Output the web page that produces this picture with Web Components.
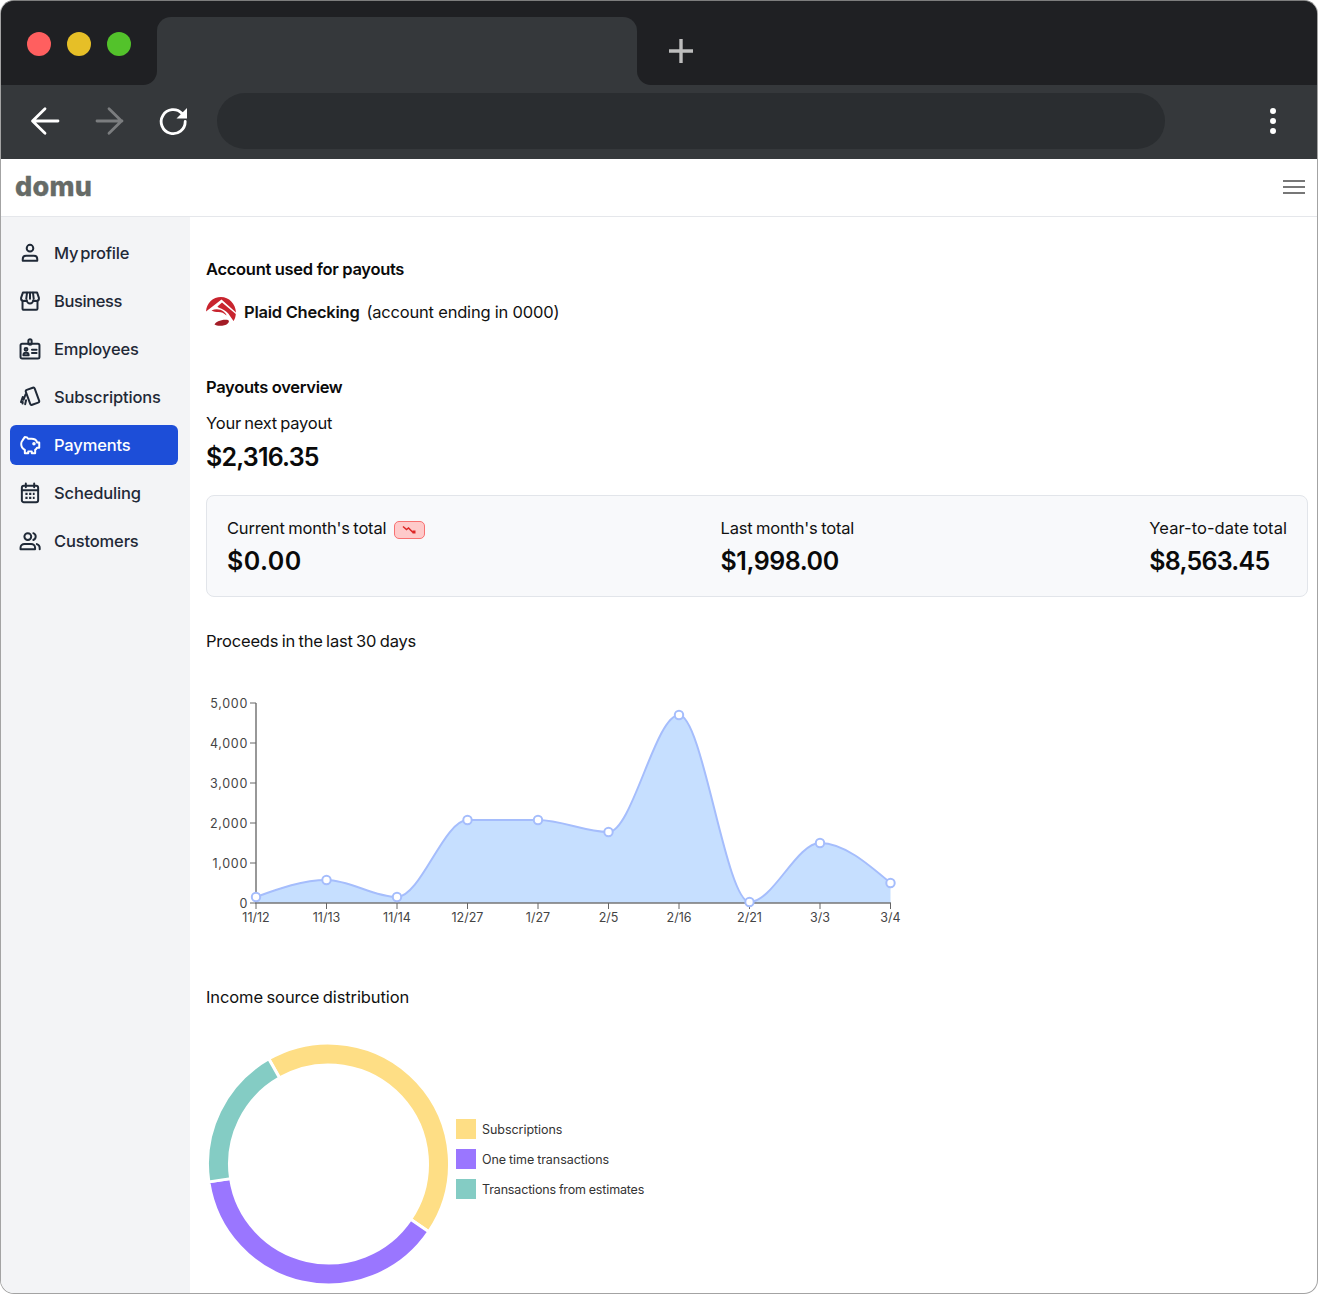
<!DOCTYPE html>
<html><head><meta charset="utf-8">
<style>
html,body{margin:0;padding:0;background:#fff}
body{width:1318px;height:1294px;overflow:hidden;font-family:"Inter","Liberation Sans",sans-serif}
</style></head><body>
<browser-window>
  <app-header slot="header"></app-header>
  <side-nav slot="nav"></side-nav>
  <payouts-page slot="main"></payouts-page>
</browser-window>
<script>
const icons={
profile:'<circle cx="10" cy="5.600" r="3"/><path d="M3.400 17v-1.500c0-1.800 1.400-3 3-3h7.200c1.600 0 3 1.200 3 3V17z"/>',
business:'<path d="M3.200 9.600V17a1 1 0 0 0 1 1h11.600a1 1 0 0 0 1-1V9.600"/><path d="M3.600 2.200h12.800l1.700 5v1a2 2 0 0 1-2.800 1.600 2.600 2.600 0 0 1-2.400-.4 2.900 2.900 0 0 1-5.800 0 2.600 2.600 0 0 1-2.400.4A2 2 0 0 1 1.900 8.200v-1z"/><path d="M7.300 2.400 6.600 8M10 2.400V8M12.700 2.400l.7 5.600"/>',
employees:'<rect x="1.400" y="5.200" width="17.200" height="13.400" rx="1.400"/><path d="M8.500 5.200V2.600a1.500 1.500 0 0 1 3 0v2.600c0 1.200-3 1.200-3 0z"/><circle cx="6.400" cy="10.300" r="1.300"/><path d="M4 15.600c0-1.600 1-2.200 2.400-2.200s2.400.6 2.400 2.200zM11.800 10.600h4.200M11.800 13.600h4.200"/>',
subs:'<rect x="8" y="2.200" width="8.600" height="14.400" rx="1.400" transform="rotate(-20 12 9.500)"/><path d="M6 7.500 4.200 12.500M3.400 10 1.800 14.600M6.400 13 5.600 16.600M3.400 14.500 3.200 16"/>',
pay:'<path d="M5.200 2.800c1.500 0 2.800.8 3.200 1.600h3c2.700 0 4.600 1.500 5.200 3.400h1.800v4.600h-2c-.4.800-1 1.500-1.700 2v3h-3.100v-1.600H8.400v1.600H5.300v-3C3.400 13.300 2 11.300 2 9c0-1.200.4-2.300 1.200-3.200z"/><circle cx="13.600" cy="8.800" r=".7" fill="currentColor"/>',
sched:'<rect x="2.600" y="3.400" width="14.800" height="15" rx="1.800"/><path d="M2.600 7.400h14.800M6.200 1.400v3.400M13.800 1.400v3.400"/><path stroke-width="2" stroke-linecap="butt" stroke-dasharray="2 1.400" d="M5.800 10.800h8.400M5.800 14.400h8.400"/>',
cust:'<circle cx="8" cy="6" r="3.100"/><path d="M1.400 17.400v-1.200c0-2.200 1.700-3.500 3.600-3.500h6c1.900 0 3.600 1.300 3.600 3.500v1.200z"/><path d="M13 2.900a3.300 3.300 0 0 1 0 6.200M16.200 12.800c1.500.5 2.600 1.700 2.600 3.400v1.200"/>'
};
customElements.define('browser-window',class extends HTMLElement{constructor(){super();this.attachShadow({mode:'open'}).innerHTML=`
<style>
:host{display:block;width:1318px;height:1294px;box-sizing:border-box;border:1px solid #a3a3a3;border-top-color:#7d7d7d;border-radius:14px;overflow:hidden;background:#fff}
.top{display:flex;height:84px;background:linear-gradient(#1f2023 40px,#35383b 40px)}
.lights{width:156px;display:flex;gap:16px;padding:31px 0 0 26px;box-sizing:border-box;background:#1f2023;border-bottom-right-radius:14px}
.lights i{width:24px;height:24px;border-radius:50%}
.tab{width:480px;margin-top:16px;height:68px;background:#35383b;border-radius:14px 14px 0 0}
.rest{flex:1;background:#1f2023;border-bottom-left-radius:14px;display:flex;padding:37px 0 0 31px;box-sizing:border-box}
.rest svg{display:block}
.tool{height:74px;background:#35383b;display:flex;align-items:center;padding-left:26px;box-sizing:border-box}
.tool svg{display:block}
.addr{width:948px;height:56px;border-radius:28px;background:#2a2d30;margin-left:26px;margin-top:-2px}
.tool .btn{width:36px;height:36px;margin-right:28px;margin-top:-3px}
.tool .btn.last{margin-right:0}
.dots{margin-left:100px;margin-top:-3px}
.app{display:grid;grid-template-columns:189px 1fr;height:1077px}
</style>
<div class="top">
 <div class="lights"><i style="background:#ff5f5f"></i><i style="background:#e6bf27"></i><i style="background:#53c22b"></i></div>
 <div class="tab"></div>
 <div class="rest"><svg width="26" height="26" viewBox="0 0 26 26"><path d="M13 1v24M1 13h24" stroke="#bdbdbd" stroke-width="3.400" fill="none"/></svg></div>
</div>
<div class="tool">
 <svg class="btn" viewBox="0 0 36 36" fill="none" stroke="#fff" stroke-width="2.800" stroke-linecap="round" stroke-linejoin="round"><path d="M31 18H6M18 5.800 5.500 18 18 30.200"/></svg>
 <svg class="btn" viewBox="0 0 36 36" fill="none" stroke="#7b7d7f" stroke-width="2.800" stroke-linecap="round" stroke-linejoin="round"><path d="M6 18h25M18 5.800 30.500 18 18 30.200"/></svg>
 <svg class="btn last" viewBox="0 0 36 36" fill="none"><path d="M27 10.500A12 12 0 1 0 30.200 18.500" stroke="#fff" stroke-width="2.800" stroke-linecap="round"/><path d="M32 5v10.500H21.500z" fill="#fff"/></svg>
 <div class="addr"></div>
 <svg class="dots" width="16" height="30" viewBox="0 0 16 30" fill="#fff"><circle cx="8" cy="5" r="3"/><circle cx="8" cy="15" r="3"/><circle cx="8" cy="25" r="3"/></svg>
</div>
<slot name="header"></slot>
<div class="app"><slot name="nav"></slot><slot name="main"></slot></div>`}});
customElements.define('app-header',class extends HTMLElement{constructor(){super();this.attachShadow({mode:'open'}).innerHTML=`
<style>
:host{display:flex;align-items:center;justify-content:space-between;height:58px;box-sizing:border-box;border-bottom:1px solid #e5e7eb;padding:0 12px 0 14px;background:#fff}
.logo{font:800 27px/1 "Inter","Liberation Sans",sans-serif;color:#666b67;letter-spacing:.3px;margin-top:-2px;-webkit-text-stroke:.3px #666b67}
svg{display:block;margin-top:-2px}
</style>
<span class="logo">domu</span>
<svg width="22" height="14" viewBox="0 0 22 14" fill="#777"><rect width="22" height="2"/><rect y="6" width="22" height="2"/><rect y="12" width="22" height="2"/></svg>`}});
customElements.define('nav-item',class extends HTMLElement{constructor(){super();const ic=this.getAttribute('icon');this.attachShadow({mode:'open'}).innerHTML=`
<style>
:host{display:flex;align-items:center;height:40px;box-sizing:border-box;padding-left:9px;gap:13px;border-radius:6px;color:#1f2937;font:500 16.500px/20px "Inter","Liberation Sans",sans-serif;letter-spacing:-.15px;word-spacing:-2px}
:host([active]){background:#1d4ed8;color:#fff}
svg{flex:none;display:block}
</style>
<svg width="22" height="22" viewBox="0 0 20 20" fill="none" stroke="currentColor" stroke-width="1.800" stroke-linecap="round" stroke-linejoin="round">${icons[ic]}</svg><slot></slot>`}});
customElements.define('side-nav',class extends HTMLElement{constructor(){super();this.attachShadow({mode:'open'}).innerHTML=`
<style>:host{display:flex;flex-direction:column;gap:8px;background:#f3f4f6;padding:16px 12px 0 9px}</style>
<nav-item icon="profile" style="letter-spacing:-.25px">My profile</nav-item><nav-item icon="business" style="letter-spacing:-.4px">Business</nav-item><nav-item icon="employees">Employees</nav-item><nav-item icon="subs">Subscriptions</nav-item><nav-item icon="pay" active>Payments</nav-item><nav-item icon="sched">Scheduling</nav-item><nav-item icon="cust">Customers</nav-item>`}});
customElements.define('stat-block',class extends HTMLElement{constructor(){super();this.attachShadow({mode:'open'}).innerHTML=`
<style>
:host{display:block;color:#111}
.l{display:flex;align-items:center;gap:8px;font:400 16.500px/24px "Inter","Liberation Sans",sans-serif;letter-spacing:var(--lls,-.2px);word-spacing:-.8px;height:24px}
.v{font:600 25px/32px "Inter","Liberation Sans",sans-serif;letter-spacing:var(--ls,0);margin-top:5px;color:#0a0a0a}
</style><div class="l"><slot name="label"></slot></div><div class="v"><slot></slot></div>`}});
customElements.define('area-chart',class extends HTMLElement{constructor(){super();
const xs=[256,326.5,397,467.5,538,608.5,679,749.5,820,890.5],ys=[897,880,897,820,820,832,715,902,843,883],lab=['11/12','11/13','11/14','12/27','1/27','2/5','2/16','2/21','3/3','3/4'];
const p=xs.map((x,i)=>[x,ys[i]]),n=p.length,h=70.5,m=[];
for(let i=1;i<n-1;i++){const s0=(ys[i]-ys[i-1])/h,s1=(ys[i+1]-ys[i])/h,q=(s0+s1)/2;m[i]=(Math.sign(s0)+Math.sign(s1))*Math.min(Math.abs(s0),Math.abs(s1),.5*Math.abs(q))}
m[0]=(3*(ys[1]-ys[0])/h-m[1])/2;m[n-1]=(3*(ys[n-1]-ys[n-2])/h-m[n-2])/2;
let d=`M${p[0]}`;
for(let i=0;i<n-1;i++){d+=` C${xs[i]+h/3} ${ys[i]+m[i]*h/3} ${xs[i+1]-h/3} ${ys[i+1]-m[i+1]*h/3} ${xs[i+1]} ${ys[i+1]}`}
const ox=206,oy=690;
let t='';[0,1000,2000,3000,4000,5000].forEach((v,i)=>{const y=903-i*40;t+=`<path d="M250 ${y}h6" stroke="#666"/><text class="y" x="248" y="${y+4.500}" text-anchor="end">${v.toLocaleString('en-US')}</text>`});
xs.forEach((x,i)=>{t+=`<path d="M${x} 903v6" stroke="#666"/><text x="${x}" y="921.500" text-anchor="middle">${lab[i]}</text>`});
this.attachShadow({mode:'open'}).innerHTML=`
<style>:host{display:block;height:240px}svg{display:block}text{font:400 12.500px "Inter","Liberation Sans",sans-serif;fill:#444}text.y{letter-spacing:.7px}</style>
<svg width="720" height="240" viewBox="${ox} ${oy} 720 240">
<path d="${d} V903 H256Z" fill="#c6dfff"/><path d="${d}" fill="none" stroke="#a5bdfc" stroke-width="2"/>
<path d="M256 703V903H891" fill="none" stroke="#777" stroke-width="1.500"/>${t}
${p.map(q=>`<circle cx="${q[0]}" cy="${q[1]}" r="4.200" fill="#fff" stroke="#a5bdfc" stroke-width="2"/>`).join('')}
</svg>`}});
customElements.define('donut-chart',class extends HTMLElement{constructor(){super();
const cx=122.5,cy=122,R=121,r=99;const pt=(a,q)=>{const t=(a-90)*Math.PI/180;return `${(cx+q*Math.cos(t)).toFixed(2)} ${(cy+q*Math.sin(t)).toFixed(2)}`};
const seg=(a,b,c)=>`<path d="M${pt(a,R)}A${R} ${R} 0 ${b-a>180?1:0} 1 ${pt(b,R)}L${pt(b,r)}A${r} ${r} 0 ${b-a>180?1:0} 0 ${pt(a,r)}Z" fill="${c}" stroke="#fff" stroke-width="3" stroke-linejoin="round"/>`;
this.attachShadow({mode:'open'}).innerHTML=`
<style>
:host{display:flex;align-items:flex-start;height:240px;gap:5px}
svg{display:block;flex:none;margin-top:-2px}
ul{list-style:none;margin:0;padding:75px 0 0;display:flex;flex-direction:column;gap:10px}
li{display:flex;align-items:center;gap:6px;height:20px;font:400 12.500px/20px "Inter","Liberation Sans",sans-serif;color:#333;letter-spacing:-.05px;word-spacing:-.5px}
li span{margin-top:2px}
i{width:20px;height:20px;display:block}
</style>
<svg width="245" height="244" viewBox="0 0 245 244">${seg(-29.600,124,'#fede85')}${seg(124,261.500,'#9a76ff')}${seg(261.500,330.400,'#84ccc4')}</svg>
<ul><li><i style="background:#fede85"></i><span>Subscriptions</span></li><li><i style="background:#9a76ff"></i><span>One time transactions</span></li><li style="letter-spacing:-.15px"><i style="background:#84ccc4"></i><span>Transactions from estimates</span></li></ul>`}});
customElements.define('payouts-page',class extends HTMLElement{constructor(){super();this.attachShadow({mode:'open'}).innerHTML=`
<style>
:host{display:block;padding:41px 9px 0 16px;color:#111;font-family:"Inter","Liberation Sans",sans-serif;min-width:0;overflow:hidden}
h2{margin:0;font:600 16.500px/22px "Inter","Liberation Sans",sans-serif;letter-spacing:-.3px;color:#0a0a0a}
.acct{display:flex;align-items:center;height:32px;margin-top:16px;gap:8px;font-size:16.500px;letter-spacing:-.2px}
.acct b{font-weight:600;color:#111;margin-right:-1px;letter-spacing:-.25px}
.next{font-size:16.500px;line-height:24px;letter-spacing:-.2px;word-spacing:-1.300px;margin-top:13px}
.big{font:600 25px/32px "Inter","Liberation Sans",sans-serif;letter-spacing:-.8px;margin-top:6px;margin-bottom:-1px;color:#0a0a0a}
.card{display:flex;justify-content:space-between;height:102px;box-sizing:border-box;margin-top:23px;border:1px solid #e2e5ea;border-radius:8px;background:#f8f9fb;padding:20px 20px 0 20px}
.badge{display:flex;align-items:center;justify-content:center;width:31px;height:18px;box-sizing:border-box;border:1px solid #f87171;border-radius:5px;background:#fecaca;margin-top:4px}
.sec{font-size:16.500px;line-height:24px;letter-spacing:-.2px;word-spacing:-1px}
</style>
<h2>Account used for payouts</h2>
<div class="acct"><svg width="30" height="30" viewBox="0 0 30 30" style="flex:none"><path d="M0 14.500C0.500 6 7 0 15 0c8 0 14.500 6.500 15 15.500L15.500 2.500z" fill="#c8242e"/><path d="M16 5.500 29.800 17c-.2 3-1 5-2.300 7L24 19c-1.500-3-5-6-9-7.500-2-.7-3-1-3.500-2z" fill="#c8242e"/><path d="M5.500 13.500c4-2 9-1.500 12 1 2 1.600 3 3 3 4-2.500-2.500-5-3.500-8-3.500-2.500 0-5 0-7-1.500z" fill="#c8242e"/><path d="M8.500 27.500c1-2.600 6-5.200 12.500-4.800 2.500.2 2.500 2.300.5 4-2.500 2.300-10 3-13 .8z" fill="#a31c26"/></svg><b>Plaid Checking</b><span>(account ending in 0000)</span></div>
<h2 style="margin-top:48px">Payouts overview</h2>
<div class="next">Your next payout</div>
<div class="big">$2,316.35</div>
<div class="card">
 <stat-block style="--ls:.5px"><span slot="label">Current month's total</span><span slot="label" class="badge"><svg width="17" height="10" viewBox="0 0 17 10" fill="none" stroke="#dc2626" stroke-width="1.500"><path d="M2 1.500l3.500 3 2-1.500 4.500 4.500"/><rect x="11.500" y="5.500" width="3" height="3" fill="#dc2626" stroke="none"/></svg></span>$0.00</stat-block>
 <stat-block style="--ls:-.45px"><span slot="label">Last month's total</span>$1,998.00</stat-block>
 <stat-block style="--ls:-.75px;--lls:.05px"><span slot="label">Year-to-date total</span>$8,563.45</stat-block>
</div>
<div class="sec" style="margin-top:32px">Proceeds in the last 30 days</div>
<area-chart style="margin-top:37px"></area-chart>
<div class="sec" style="margin-top:55px;letter-spacing:-.1px">Income source distribution</div>
<donut-chart style="margin-top:35px"></donut-chart>`}});
</script>
</body></html>
